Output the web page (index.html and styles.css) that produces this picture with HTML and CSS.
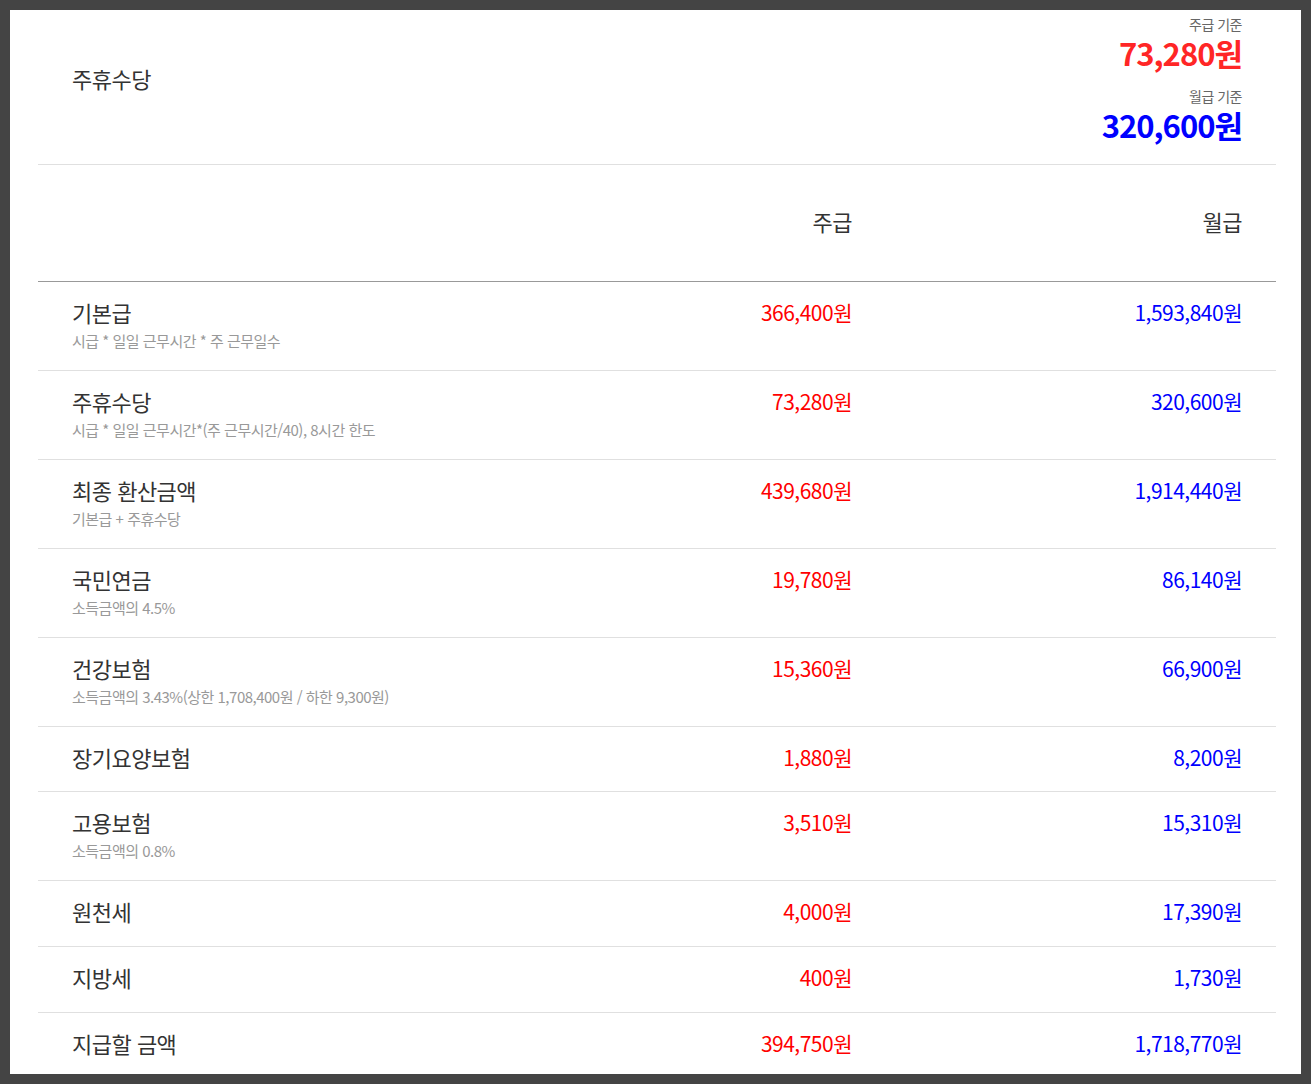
FILE: index.html
```html
<!DOCTYPE html>
<html lang="ko">
<head>
<meta charset="utf-8">
<link rel="stylesheet" href="styles.css">
</head>
<body>
<div class="page">
  <div class="summary">
    <div class="summary-title">주휴수당</div>
    <div class="summary-values">
      <div class="basis">주급 기준</div>
      <div class="big red">73,280원</div>
      <div class="basis second">월급 기준</div>
      <div class="big blue">320,600원</div>
    </div>
  </div>
  <div class="table">
    <div class="row head">
      <div class="cell label"></div>
      <div class="cell num">주급</div>
      <div class="cell num">월급</div>
    </div>
    <div class="row">
      <div class="cell label"><div class="t">기본급</div><div class="s">시급 * 일일 근무시간 * 주 근무일수</div></div>
      <div class="cell num wk">366,400원</div>
      <div class="cell num mo">1,593,840원</div>
    </div>
    <div class="row">
      <div class="cell label"><div class="t">주휴수당</div><div class="s">시급 * 일일 근무시간*(주 근무시간/40), 8시간 한도</div></div>
      <div class="cell num wk">73,280원</div>
      <div class="cell num mo">320,600원</div>
    </div>
    <div class="row">
      <div class="cell label"><div class="t">최종 환산금액</div><div class="s">기본급 + 주휴수당</div></div>
      <div class="cell num wk">439,680원</div>
      <div class="cell num mo">1,914,440원</div>
    </div>
    <div class="row">
      <div class="cell label"><div class="t">국민연금</div><div class="s">소득금액의 4.5%</div></div>
      <div class="cell num wk">19,780원</div>
      <div class="cell num mo">86,140원</div>
    </div>
    <div class="row">
      <div class="cell label"><div class="t">건강보험</div><div class="s">소득금액의 3.43%(상한 1,708,400원 / 하한 9,300원)</div></div>
      <div class="cell num wk">15,360원</div>
      <div class="cell num mo">66,900원</div>
    </div>
    <div class="row single short">
      <div class="cell label"><div class="t">장기요양보험</div></div>
      <div class="cell num wk">1,880원</div>
      <div class="cell num mo">8,200원</div>
    </div>
    <div class="row">
      <div class="cell label"><div class="t">고용보험</div><div class="s">소득금액의 0.8%</div></div>
      <div class="cell num wk">3,510원</div>
      <div class="cell num mo">15,310원</div>
    </div>
    <div class="row single">
      <div class="cell label"><div class="t">원천세</div></div>
      <div class="cell num wk">4,000원</div>
      <div class="cell num mo">17,390원</div>
    </div>
    <div class="row single">
      <div class="cell label"><div class="t">지방세</div></div>
      <div class="cell num wk">400원</div>
      <div class="cell num mo">1,730원</div>
    </div>
    <div class="row single last">
      <div class="cell label"><div class="t">지급할 금액</div></div>
      <div class="cell num wk">394,750원</div>
      <div class="cell num mo">1,718,770원</div>
    </div>
  </div>
</div>
</body>
</html>
```

FILE: styles.css
```css
html, body {
  margin: 0;
  padding: 0;
}
body {
  background: #444444;
  padding: 10px;
  height: 1084px;
  box-sizing: border-box;
  overflow: hidden;
  font-family: "Noto Sans CJK KR", "Noto Sans", sans-serif;
  color: #333;
}
.page {
  background: #fff;
  height: 1064px;
  padding: 0 25px 0 28px;
  overflow: hidden;
}
.summary {
  display: flex;
  justify-content: space-between;
  align-items: flex-start;
  padding: 5px 34px 21px 34px;
  border-bottom: 1px solid #e0e0e0;
}
.summary-title {
  font-size: 22px;
  line-height: 24px;
  margin-top: 51px;
  letter-spacing: -0.5px;
}
.summary-values {
  text-align: right;
}
.basis {
  font-size: 14px;
  line-height: 18px;
  color: #666;
  letter-spacing: -0.5px;
}
.basis.second {
  margin-top: 16px;
}
.big {
  font-size: 31px;
  font-weight: 700;
  line-height: 36px;
  margin-top: 2px;
  letter-spacing: -1px;
}
.red { color: #ff2626; }
.blue { color: #0000ff; }

.row {
  display: grid;
  grid-template-columns: 1fr 390px 390px;
  border-bottom: 1px solid #e0e0e0;
  padding: 18px 0 19px;
}
.row.single {
  padding-bottom: 23px;
}
.row.single.short {
  padding-bottom: 22px;
}
.row.head {
  padding: 0 0 4px;
  height: 112px;
  align-items: center;
  border-bottom: 1px solid #999;
}
.row.last {
  border-bottom: none;
}
.cell {
  padding: 0 34px;
}
.num {
  text-align: right;
  font-size: 21px;
  line-height: 24px;
  letter-spacing: -0.5px;
}
.head .num {
  color: #333;
  font-size: 22px;
  letter-spacing: -0.5px;
}
.wk { color: #ff0000; }
.mo { color: #0000ff; }
.t {
  font-size: 22px;
  line-height: 24px;
  letter-spacing: -0.5px;
}
.s {
  margin-top: 7px;
  font-size: 15px;
  line-height: 20px;
  color: #999;
  letter-spacing: -0.5px;
}
```
